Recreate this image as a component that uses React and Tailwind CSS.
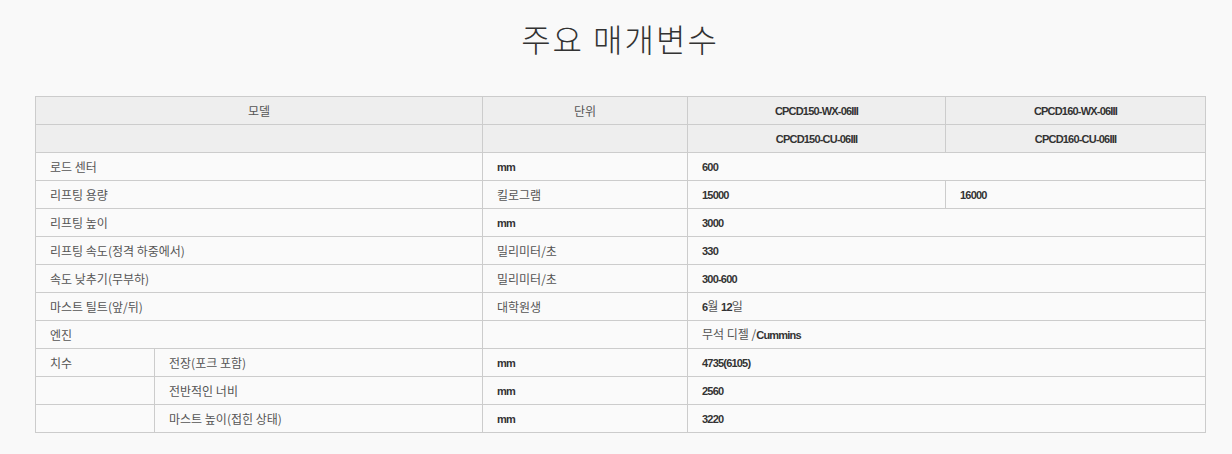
import React from "react";

const LAT = "'Liberation Sans',Arial,sans-serif";

function Txt({ t }) {
  if (!t) return null;
  const parts = t.split(/([A-Za-z0-9][A-Za-z0-9\-()\/ ]*[A-Za-z0-9)]|[A-Za-z0-9])/g);
  return (
    <>
      {parts.map((p, i) =>
        /[A-Za-z0-9]/.test(p) ? (
          <span key={i} className="font-bold text-[#333] text-[11px] tracking-[-0.8px]" style={{ fontFamily: LAT }}>
            {p}
          </span>
        ) : (
          <span key={i}>{p}</span>
        )
      )}
    </>
  );
}

const body = "border border-[#cccccc] bg-[#fafafa] px-[14px] h-[28px] text-left align-middle";
const head = "border border-[#cccccc] bg-[#eeeeee] px-[14px] h-[28px] text-center align-middle";

export default function App() {
  return (
    <div className="min-h-[454px] bg-[#f9f9f9] text-[#555] text-[12px]" style={{ fontFamily: "'Noto Sans CJK KR','Noto Sans',sans-serif" }}>
      <div className="ml-[35px] w-[1170px]">
        <h1 className="pt-[14px] pb-[34px] text-center text-[32px] leading-[48px] font-light text-[#333] tracking-[2px]">
          주요 매개변수
        </h1>
        <table className="w-full table-fixed border-collapse">
          <colgroup>
            <col className="w-[119px]" />
            <col className="w-[328px]" />
            <col className="w-[205px]" />
            <col className="w-[258px]" />
            <col className="w-[260px]" />
          </colgroup>
          <tbody>
            <tr>
              <td colSpan={2} className={head}>모델</td>
              <td className={head}>단위</td>
              <td className={head}><Txt t="CPCD150-WX-06III" /></td>
              <td className={head}><Txt t="CPCD160-WX-06III" /></td>
            </tr>
            <tr>
              <td colSpan={2} className={head}></td>
              <td className={head}></td>
              <td className={head}><Txt t="CPCD150-CU-06III" /></td>
              <td className={head}><Txt t="CPCD160-CU-06III" /></td>
            </tr>
            <tr>
              <td colSpan={2} className={body}>로드 센터</td>
              <td className={body}><Txt t="mm" /></td>
              <td colSpan={2} className={body}><Txt t="600" /></td>
            </tr>
            <tr>
              <td colSpan={2} className={body}>리프팅 용량</td>
              <td className={body}>킬로그램</td>
              <td className={body}><Txt t="15000" /></td>
              <td className={body}><Txt t="16000" /></td>
            </tr>
            <tr>
              <td colSpan={2} className={body}>리프팅 높이</td>
              <td className={body}><Txt t="mm" /></td>
              <td colSpan={2} className={body}><Txt t="3000" /></td>
            </tr>
            <tr>
              <td colSpan={2} className={body}>리프팅 속도(정격 하중에서)</td>
              <td className={body}>밀리미터/초</td>
              <td colSpan={2} className={body}><Txt t="330" /></td>
            </tr>
            <tr>
              <td colSpan={2} className={body}>속도 낮추기(무부하)</td>
              <td className={body}>밀리미터/초</td>
              <td colSpan={2} className={body}><Txt t="300-600" /></td>
            </tr>
            <tr>
              <td colSpan={2} className={body}>마스트 틸트(앞/뒤)</td>
              <td className={body}>대학원생</td>
              <td colSpan={2} className={body}><Txt t="6월 12일" /></td>
            </tr>
            <tr>
              <td colSpan={2} className={body}>엔진</td>
              <td className={body}></td>
              <td colSpan={2} className={body}>무석 디젤<Txt t=" /Cummins" /></td>
            </tr>
            <tr>
              <td className={body}>치수</td>
              <td className={body}>전장(포크 포함)</td>
              <td className={body}><Txt t="mm" /></td>
              <td colSpan={2} className={body}><Txt t="4735(6105)" /></td>
            </tr>
            <tr>
              <td className={body}></td>
              <td className={body}>전반적인 너비</td>
              <td className={body}><Txt t="mm" /></td>
              <td colSpan={2} className={body}><Txt t="2560" /></td>
            </tr>
            <tr>
              <td className={body}></td>
              <td className={body}>마스트 높이(접힌 상태)</td>
              <td className={body}><Txt t="mm" /></td>
              <td colSpan={2} className={body}><Txt t="3220" /></td>
            </tr>
          </tbody>
        </table>
      </div>
    </div>
  );
}
